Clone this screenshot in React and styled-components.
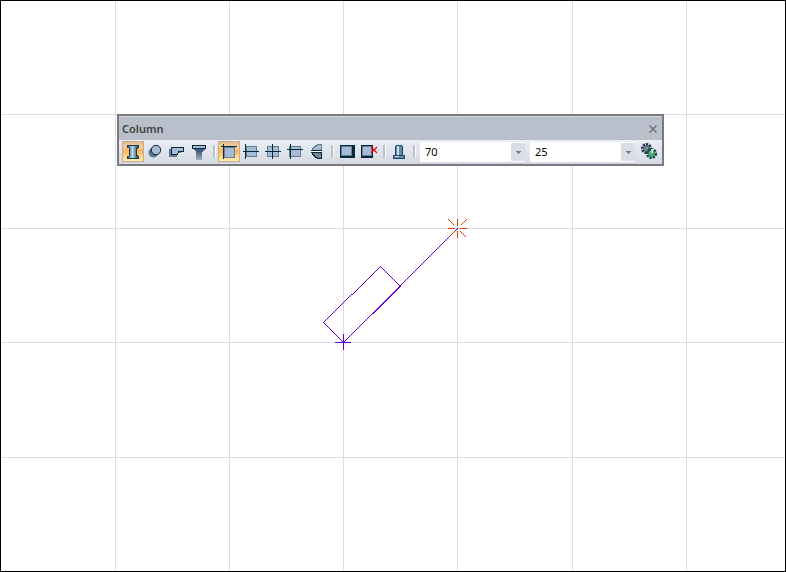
import React, { useState } from 'react'
import styled, { createGlobalStyle } from 'styled-components'

const GlobalStyle = createGlobalStyle`
html, body, #root {
  height: 100%;
  margin: 0;
}
* {
  box-sizing: border-box;
}
body {
  font-family: "Noto Sans", "Open Sans", sans-serif;
  font-size: 11px;
  background: #fff;
}
`

const Workspace = styled.main`
  position: relative;
  min-height: 100vh;
  border: 1px solid #000;
  overflow: hidden;
`

const Drawing = styled.svg`
  position: absolute;
  inset: -1px;
  width: calc(100% + 2px);
  height: calc(100% + 2px);
`

/* floats over the drawing canvas */
const Palette = styled.section`
  position: absolute;
  left: 116px;
  top: 113px;
  border: 2px solid #7b797d;
  background: #e3e8f1;
`

const TitleBar = styled.header`
  display: flex;
  align-items: center;
  justify-content: space-between;
  height: 24px;
  padding: 0 5px 0 3px;
  background: #b9c0cb;
  border-top: 1px solid #d5d9e1;
`

const Title = styled.h1`
  margin: 0;
  font-size: 11px;
  line-height: 16px;
  font-weight: 600;
  color: #404040;
`

const CloseButton = styled.button`
  display: flex;
  padding: 0;
  border: 0;
  background: none;
`

const Tools = styled.div`
  display: flex;
  align-items: center;
  height: 24px;
  padding: 0 2px 1px 3px;
  background: linear-gradient(#e9edf5, #dde2eb 60%, #d3d8e2);
`

const ToolButton = styled.button`
  display: flex;
  padding: 0;
  border: 0;
  background: ${(p) => (p.$active ? 'linear-gradient(#dcb596, #fbcf9c 28%, #fdb45c 48%, #ffd98a 75%, #fff3bc)' : 'none')};
  box-shadow: ${(p) => (p.$active ? 'inset 0 0 0 1px #c9ac88' : 'none')};
`

const Separator = styled.span`
  width: 8px;
  height: 13px;
  padding-left: 3px;

  &::before {
    content: '';
    display: block;
    width: 2px;
    height: 100%;
    background: #bcc0c8;
    border-right: 1px solid #fafbfc;
  }
`

const Combo = styled.div`
  display: flex;
  width: 105px;
  height: 20px;
  margin-top: 1px;
  margin-left: ${(p) => p.$gap}px;
  background: #fff;
`

const ComboInput = styled.input`
  flex: 1;
  min-width: 0;
  padding: 0 5px 2px;
  border: 0;
  outline: 0;
  background: #fff;
  font: inherit;
  color: #000;
`

const ComboArrow = styled.button`
  display: flex;
  align-items: center;
  justify-content: center;
  width: 14px;
  padding: 0;
  border: 1px solid #fff;
  border-width: 1px 0;
  background: #dadee7;
`

const Spacer = styled.span`
  width: 3px;
`

const DARK = '#08283a'
const FILL = '#a5bbd6'
const EDGE = '#627f93'

const Glyph = ({ children }) => (
  <svg width="22" height="21" viewBox="0 0 22 21" shapeRendering="crispEdges" aria-hidden="true">
    {children}
  </svg>
)

const Box = ({ x, y, w, h }) => (
  <>
    <rect x={x} y={y} width={w} height={h} fill={EDGE} />
    <rect x={x + 1} y={y + 1} width={w - 2} height={h - 2} fill={FILL} />
  </>
)

const icons = {
  profile: (
    <Glyph>
      <defs>
        <linearGradient id="steel">
          <stop offset="0.1" stopColor="#50788c" />
          <stop offset="0.45" stopColor="#c0dbe5" />
          <stop offset="0.9" stopColor="#3b6175" />
        </linearGradient>
      </defs>
      <path d="M5 4H17V7H16L15 8V14L16 15H17V18H5V15H6L7 14V8L6 7H5Z" fill="#183c50" />
      <path d="M6 5H16V6H15L14 8V14L15 16H16V17H6V16H7L8 14V8L7 6H6Z" fill="url(#steel)" />
    </Glyph>
  ),
  round: (
    <Glyph>
      <circle cx="9.500" cy="11.500" r="5" fill="#54788c" shapeRendering="auto" />
      <circle cx="12" cy="9" r="4.700" fill={FILL} stroke={DARK} shapeRendering="auto" />
    </Glyph>
  ),
  polygon: (
    <Glyph>
      <path d="M3 8H15V12H11V16H3Z" fill="#5f7b8e" />
      <path d="M5.500 6.500H17.500V10.500H12.500L11.500 13.500H5.500Z" fill={FILL} stroke={DARK} />
    </Glyph>
  ),
  capital: (
    <Glyph>
      <defs>
        <linearGradient id="stem" x2="0" y2="1">
          <stop offset="0" stopColor="#486580" />
          <stop offset="1" stopColor="#a6b0b9" />
        </linearGradient>
      </defs>
      <path d="M6 8H17L14 12H9Z" fill="#3f617f" />
      <rect x="8" y="11" width="6" height="8" fill="url(#stem)" />
      <rect x="4.500" y="4.500" width="13" height="3" fill={FILL} stroke={DARK} />
    </Glyph>
  ),
  corner: (
    <Glyph>
      <Box x={6} y={6} w={11} h={11} />
      <path d="M3 5.500H19M5.500 3V18" stroke={DARK} />
    </Glyph>
  ),
  side: (
    <Glyph>
      <Box x={6} y={5} w={11} h={11} />
      <path d="M3 10.500H19M5.500 3V18" stroke={DARK} />
    </Glyph>
  ),
  center: (
    <Glyph>
      <Box x={5} y={5} w={12} h={11} />
      <path d="M3 10.500H19M10.500 3V18" stroke={DARK} />
    </Glyph>
  ),
  offset: (
    <Glyph>
      <Box x={5} y={5} w={12} h={11} />
      <path d="M3 8.500H19M6.500 3V18" stroke={DARK} />
    </Glyph>
  ),
  flip: (
    <Glyph>
      <path d="M15.500 3.500H13L10 4.500L7 7.500L6 9.500H15.500Z" fill={FILL} stroke={EDGE} />
      <path d="M15.500 17.500H13L10 16.500L7 13.500L6 11.500H15.500Z" fill="#73899a" stroke={DARK} />
      <path d="M5 9.500H16" stroke={DARK} />
      <path d="M5 10.500H16" stroke="#f4f7fa" />
    </Glyph>
  ),
  wall: (
    <Glyph>
      <rect x="4" y="4" width="15" height="13" fill={DARK} />
      <Box x={5} y={5} w={11} h={10} />
    </Glyph>
  ),
  noWall: (
    <Glyph>
      <rect x="3" y="4" width="12" height="13" fill={DARK} />
      <Box x={4} y={5} w={10} h={10} />
      <path d="M13 6L19 12M19 6L13 12" stroke="#f00606" strokeWidth="1.200" shapeRendering="auto" />
    </Glyph>
  ),
  base: (
    <Glyph>
      <path d="M8 4H14V5H15V14H17V18H5V14H7V5H8Z" fill="#1d4560" />
      <path d="M8 5H14V14H8ZM6 15H16V17H6Z" fill="#5f8ca8" />
      <path d="M9 5H11V14H9ZM7 15H11V16H7Z" fill="#c2dfec" />
    </Glyph>
  ),
  settings: (
    <Glyph>
      <g fill="none" shapeRendering="auto">
        <circle cx="8.500" cy="7.500" r="4.300" stroke="#26344a" strokeWidth="2.500" strokeDasharray="2.200 1" />
        <circle cx="8.500" cy="7.500" r="3" fill="#78879b" stroke="#35435a" />
        <circle cx="13.500" cy="12.500" r="4.300" stroke="#174b35" strokeWidth="2.500" strokeDasharray="2.200 1" />
        <circle cx="13.500" cy="12.500" r="3.200" fill="#4fae7f" stroke="#2f8159" />
        <path d="M13 8H15V12H13Z" fill="#d5e3e3" />
      </g>
    </Glyph>
  ),
}

const groups = [
  [
    ['profile', 'Profile column'],
    ['round', 'Round column'],
    ['polygon', 'Polygonal column'],
    ['capital', 'Column capital'],
  ],
  [
    ['corner', 'Corner axis'],
    ['side', 'Side axis'],
    ['center', 'Center axis'],
    ['offset', 'Offset axis'],
    ['flip', 'Flip'],
  ],
  [
    ['wall', 'Join with wall'],
    ['noWall', 'Separate from wall'],
  ],
  [['base', 'Base']],
]

const ComboBox = ({ label, initial, gap }) => {
  const [value, setValue] = useState(initial)
  return (
    <Combo $gap={gap}>
      <ComboInput aria-label={label} value={value} onChange={(e) => setValue(e.target.value)} />
      <ComboArrow aria-label={`${label} list`}>
        <svg width="5" height="3" viewBox="0 0 5 3" shapeRendering="crispEdges">
          <path d="M0 0H5V1H4V2H3V3H2V2H1V1H0Z" fill="#7d7d80" />
        </svg>
      </ComboArrow>
    </Combo>
  )
}

const STEP = 114.2
const steps = Array.from({ length: 30 }, (_, i) => i + 1)

const Canvas = () => (
  <Drawing shapeRendering="crispEdges" role="img" aria-label="Plan view">
    <g fill="#dcdce8">
      {steps.map((n) => (
        <rect key={`v${n}`} x={Math.floor(n * STEP + 1)} y="1" width="1" height="100%" />
      ))}
      {steps.map((n) => (
        <rect key={`h${n}`} x="1" y={Math.floor(n * STEP + 0.2)} width="100%" height="1" />
      ))}
    </g>
    <g fill="none" stroke="#6600dd">
      <path d="M343.500 342.500L457.500 228.500" />
      <path d="M343.500 342.500L323.500 322.500L351.500 294.500H352.500L380.500 266.500L400.500 286.500" />
      <path d="M400.500 286.500L372.500 314.500M335 342.500H351M343.500 334V350" />
    </g>
    <path
      d="M448 228.500H455M460 228.500H467M457.500 219V226M457.500 231V238M448.500 219.500L454.500 225.500M466.500 219.500L460.500 225.500M466.500 237.500L460.500 231.500M448.500 237.500L454.500 231.500"
      fill="none"
      stroke="#e63c00"
    />
  </Drawing>
)

const App = () => {
  const [active, setActive] = useState({ 0: 'profile', 1: 'corner' })

  return (
    <Workspace>
      <GlobalStyle />
      <Canvas />
      <Palette>
        <TitleBar>
          <Title>Column</Title>
          <CloseButton aria-label="Close">
            <svg width="8" height="8" viewBox="0 0 8 8">
              <path d="M0.500 0.500L7.500 7.500M7.500 0.500L0.500 7.500" stroke="#6b6d72" strokeWidth="1.300" />
            </svg>
          </CloseButton>
        </TitleBar>
        <Tools>
          {groups.map((group, i) => (
            <React.Fragment key={i}>
              {group.map(([name, label]) => (
                <ToolButton
                  key={name}
                  aria-label={label}
                  $active={active[i] === name}
                  onClick={() => setActive({ ...active, [i]: name })}
                >
                  {icons[name]}
                </ToolButton>
              ))}
              <Separator />
            </React.Fragment>
          ))}
          <ComboBox label="Width" initial="70" gap={2} />
          <ComboBox label="Depth" initial="25" gap={5} />
          <Spacer />
          <ToolButton aria-label="Settings">{icons.settings}</ToolButton>
        </Tools>
      </Palette>
    </Workspace>
  )
}

export default App
